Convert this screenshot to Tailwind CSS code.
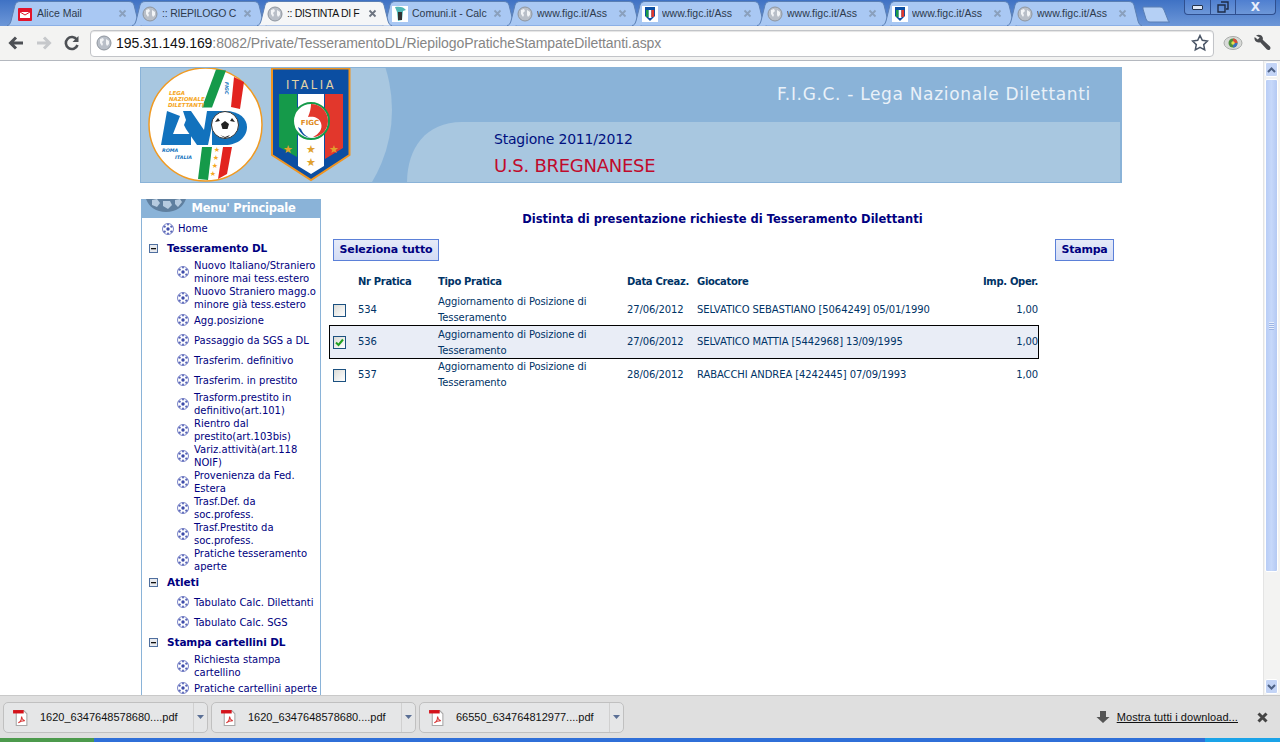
<!DOCTYPE html>
<html lang="it"><head><meta charset="utf-8">
<script src="https://cdn.jsdelivr.net/npm/@tailwindcss/browser@4"></script>
<title>Distinta</title></head>
<body class="m-0 bg-white">
<svg width="0" height="0" class="absolute">
  <defs>
    <symbol id="globe" viewBox="0 0 16 16"><circle cx="8" cy="8" r="7" fill="#b9bfc8" stroke="#8e959e"/><path d="M4 4l3-1 1 2-2 2 1 2-1 2-2-3zM10 4l3 2 0 3-2 2-1-2z" fill="#f2f4f6"/></symbol>
    <symbol id="figc" viewBox="0 0 16 16"><rect width="16" height="16" fill="#fff"/><path d="M3 1h10v9l-5 5-5-5z" fill="#0b4ea2"/><rect x="4" y="4" width="2.7" height="7" fill="#1c9a47"/><rect x="6.7" y="4" width="2.7" height="8" fill="#fff"/><rect x="9.4" y="4" width="2.7" height="7" fill="#e03a2c"/></symbol>
    <symbol id="ball" viewBox="0 0 12 12"><circle cx="6" cy="6" r="5.500" fill="#fff" stroke="#7a84c8"/><circle cx="6" cy="6" r="1.700" fill="#3c4aa8"/><circle cx="2.600" cy="3.600" r="1.200" fill="#5a67b8"/><circle cx="9.400" cy="3.600" r="1.200" fill="#5a67b8"/><circle cx="2.600" cy="8.600" r="1.200" fill="#5a67b8"/><circle cx="9.400" cy="8.600" r="1.200" fill="#5a67b8"/><circle cx="6" cy="10.600" r="1" fill="#5a67b8"/><circle cx="6" cy="1.400" r="1" fill="#5a67b8"/></symbol>
    <symbol id="minus" viewBox="0 0 9 9"><rect x=".5" y=".5" width="8" height="8" fill="#e8eaee" stroke="#4f6f9f"/><rect x="2" y="4" width="5" height="1.300" fill="#111"/></symbol>
    <symbol id="pdf" viewBox="0 0 16 16"><path d="M4 1.500h7l3 3v11H4z" fill="#fff" stroke="#a8a8a8"/><path d="M1 1h10v3.200H1z" fill="#d4121a"/><path d="M6 13c2-1 3-4 3-6 0 2 1 3 3 4-2 0-4 0-6 2z" fill="none" stroke="#d83a3a"/></symbol>
    <symbol id="tabshape" viewBox="0 0 135 26" preserveAspectRatio="none"><path d="M0 25.500C2 25.500 3 24 4 21L8 5C9 3 10 1.500 13 1.500H122C125 1.500 126 3 127 5L131 21C132 24 133 25.500 135 25.500" fill="currentColor" stroke="#5a7fb4"/></symbol>
    <symbol id="tabx" viewBox="0 0 9 9"><path d="M1.500 1.500l6 6M7.500 1.500l-6 6" fill="none" stroke="currentColor" stroke-width="1.800"/></symbol>
  </defs>
</svg>

<div class="relative flex h-[742px] w-[1280px] flex-col overflow-hidden font-['DejaVu_Sans',sans-serif] text-[11px]">

  <!-- tab strip -->
  <div class="relative h-[26px] shrink-0 bg-gradient-to-b from-[#3f72c4] to-[#6d97d8]">
    <div class="flex h-[26px] pl-[7px] font-['Liberation_Sans',sans-serif] text-[10.500px] text-[#2d3a4d]">
      <div class="relative -mr-[10px] h-[26px] w-[135px] shrink-0 text-[#a9c8f3]"><svg class="absolute inset-0 h-full w-full"><use href="#tabshape"/></svg>
        <div class="relative flex h-[26px] items-center pl-[10px] pr-[15px] pt-[1px]"><svg width="16" height="16" viewBox="0 0 16 16" class="shrink-0"><rect x="1" y="2" width="14" height="13" rx="1" fill="#e2132b"/><path d="M3 6h10v6H3z" fill="#fff"/><path d="M3 6l5 3 5-3" fill="none" stroke="#e2132b"/></svg><span class="ml-[4px] w-[76px] overflow-hidden whitespace-nowrap text-[#2d3a4d]">Alice Mail</span><svg width="9" height="9" class="ml-auto text-[#8aa0bd]"><use href="#tabx"/></svg></div></div>
      <div class="relative -mr-[10px] h-[26px] w-[135px] shrink-0 text-[#a9c8f3]"><svg class="absolute inset-0 h-full w-full"><use href="#tabshape"/></svg>
        <div class="relative flex h-[26px] items-center pl-[10px] pr-[15px] pt-[1px]"><svg width="16" height="16" class="shrink-0"><use href="#globe"/></svg><span class="ml-[4px] w-[76px] overflow-hidden whitespace-nowrap tracking-[-.2px] text-[#2d3a4d]">:: RIEPILOGO C</span><svg width="9" height="9" class="ml-auto text-[#8aa0bd]"><use href="#tabx"/></svg></div></div>
      <div class="relative z-10 -mr-[10px] h-[26px] w-[135px] shrink-0 text-[#f5f6f7]"><svg class="absolute inset-0 h-full w-full"><use href="#tabshape"/></svg>
        <div class="relative flex h-[26px] items-center pl-[10px] pr-[15px] pt-[1px]"><svg width="16" height="16" class="shrink-0"><use href="#globe"/></svg><span class="ml-[4px] w-[78px] whitespace-nowrap tracking-[-.35px] text-[#111]">:: DISTINTA DI F</span><svg width="9" height="9" class="ml-auto text-[#6d7480]"><use href="#tabx"/></svg></div></div>
      <div class="relative -mr-[10px] h-[26px] w-[135px] shrink-0 text-[#a9c8f3]"><svg class="absolute inset-0 h-full w-full"><use href="#tabshape"/></svg>
        <div class="relative flex h-[26px] items-center pl-[10px] pr-[15px] pt-[1px]"><svg width="16" height="16" viewBox="0 0 16 16" class="shrink-0"><rect width="16" height="16" fill="#fff"/><path d="M3 1c5-1 9 0 11 3l-3 1-1 9-4 1-1-9z" fill="#4fb7b5"/><path d="M6 6h4v8H6z" fill="#333"/></svg><span class="ml-[4px] w-[76px] overflow-hidden whitespace-nowrap text-[#2d3a4d]">Comuni.it - Calc</span><svg width="9" height="9" class="ml-auto text-[#8aa0bd]"><use href="#tabx"/></svg></div></div>
      <div class="relative -mr-[10px] h-[26px] w-[135px] shrink-0 text-[#a9c8f3]"><svg class="absolute inset-0 h-full w-full"><use href="#tabshape"/></svg>
        <div class="relative flex h-[26px] items-center pl-[10px] pr-[15px] pt-[1px]"><svg width="16" height="16" class="shrink-0"><use href="#globe"/></svg><span class="ml-[4px] w-[76px] overflow-hidden whitespace-nowrap text-[#2d3a4d]">www.figc.it/Ass</span><svg width="9" height="9" class="ml-auto text-[#8aa0bd]"><use href="#tabx"/></svg></div></div>
      <div class="relative -mr-[10px] h-[26px] w-[135px] shrink-0 text-[#a9c8f3]"><svg class="absolute inset-0 h-full w-full"><use href="#tabshape"/></svg>
        <div class="relative flex h-[26px] items-center pl-[10px] pr-[15px] pt-[1px]"><svg width="16" height="16" class="shrink-0"><use href="#figc"/></svg><span class="ml-[4px] w-[76px] overflow-hidden whitespace-nowrap text-[#2d3a4d]">www.figc.it/Ass</span><svg width="9" height="9" class="ml-auto text-[#8aa0bd]"><use href="#tabx"/></svg></div></div>
      <div class="relative -mr-[10px] h-[26px] w-[135px] shrink-0 text-[#a9c8f3]"><svg class="absolute inset-0 h-full w-full"><use href="#tabshape"/></svg>
        <div class="relative flex h-[26px] items-center pl-[10px] pr-[15px] pt-[1px]"><svg width="16" height="16" class="shrink-0"><use href="#globe"/></svg><span class="ml-[4px] w-[76px] overflow-hidden whitespace-nowrap text-[#2d3a4d]">www.figc.it/Ass</span><svg width="9" height="9" class="ml-auto text-[#8aa0bd]"><use href="#tabx"/></svg></div></div>
      <div class="relative -mr-[10px] h-[26px] w-[135px] shrink-0 text-[#a9c8f3]"><svg class="absolute inset-0 h-full w-full"><use href="#tabshape"/></svg>
        <div class="relative flex h-[26px] items-center pl-[10px] pr-[15px] pt-[1px]"><svg width="16" height="16" class="shrink-0"><use href="#figc"/></svg><span class="ml-[4px] w-[76px] overflow-hidden whitespace-nowrap text-[#2d3a4d]">www.figc.it/Ass</span><svg width="9" height="9" class="ml-auto text-[#8aa0bd]"><use href="#tabx"/></svg></div></div>
      <div class="relative -mr-[10px] h-[26px] w-[135px] shrink-0 text-[#a9c8f3]"><svg class="absolute inset-0 h-full w-full"><use href="#tabshape"/></svg>
        <div class="relative flex h-[26px] items-center pl-[10px] pr-[15px] pt-[1px]"><svg width="16" height="16" class="shrink-0"><use href="#globe"/></svg><span class="ml-[4px] w-[76px] overflow-hidden whitespace-nowrap text-[#2d3a4d]">www.figc.it/Ass</span><svg width="9" height="9" class="ml-auto text-[#8aa0bd]"><use href="#tabx"/></svg></div></div>
      <svg width="28" height="17" viewBox="0 0 28 17" class="relative ml-[10px] mt-[6px] shrink-0"><path d="M1 1h17c2 0 3 1 4 3l4 10c.3 1 .8 2 1.500 2H8c-2 0-3-1-4-3L1 3z" fill="#b5d0f5" stroke="#5a7fb4"/></svg>
    </div>
    <!-- window buttons -->
    <div class="absolute right-[4px] top-0 flex h-[15px] w-[92px] overflow-hidden rounded-b-[4px] border border-t-0 border-[#2f4f8f] bg-gradient-to-b from-[#4f7fd0] to-[#6d97d8]">
      <div class="flex w-[26px] items-center justify-center border-r border-[#2f4f8f]"><div class="h-[5px] w-[11px] rounded-[1px] border border-[#24344f] bg-[#dfe8f7]"></div></div>
      <div class="flex w-[25px] items-center justify-center border-r border-[#2f4f8f]"><svg width="12" height="12" viewBox="0 0 12 12"><path d="M4 1h7v7H9M1 4h7v7H1z" fill="none" stroke="#1e2c48" stroke-width="1.400"/></svg></div>
      <div class="flex flex-1 items-center justify-center text-[12px] font-bold leading-none text-[#e8eefb]">X</div>
    </div>
  </div>

  <!-- toolbar -->
  <div class="flex h-[35px] shrink-0 items-center border-b border-[#b4b8bf] bg-[#f3f3f2] pl-[6px] pr-[7px]">
    <svg width="20" height="20" viewBox="0 0 20 20" class="shrink-0"><path d="M17 10H6M10 4.500L4.500 10l5.500 5.500" fill="none" stroke="#4d5055" stroke-width="3"/></svg>
    <svg width="20" height="20" viewBox="0 0 20 20" class="ml-[8px] shrink-0"><path d="M3 10h11M10 4.500l5.500 5.500-5.500 5.500" fill="none" stroke="#c6c8cb" stroke-width="3"/></svg>
    <svg width="20" height="20" viewBox="0 0 20 20" class="ml-[8px] shrink-0"><path d="M15.500 12a6 6 0 1 1-.6-5.200" fill="none" stroke="#4d5055" stroke-width="2.600"/><path d="M16.500 3v6h-6z" fill="#4d5055"/></svg>
    <div class="ml-[8px] flex h-[27px] flex-1 items-center rounded-[4px] border border-[#c2c4c8] bg-white pl-[5px] pr-[2px] shadow-[inset_0_1px_1px_#e4e4e4]">
      <svg width="16" height="16" class="shrink-0"><use href="#globe"/></svg>
      <div class="ml-[4px] flex-1 whitespace-nowrap font-['Liberation_Sans',sans-serif] text-[14px] tracking-[-.07px] text-[#111]">195.31.149.169<span class="text-[#858585]">:8082/Private/TesseramentoDL/RiepilogoPraticheStampateDilettanti.aspx</span></div>
      <svg width="18" height="18" viewBox="0 0 18 18" class="mr-[2px] shrink-0"><path d="M9 1.500l2.300 4.800 5.200.7-3.800 3.600 1 5.200L9 13.300l-4.700 2.500 1-5.200L1.500 7l5.200-.7z" fill="#fff" stroke="#4a5566" stroke-width="1.500"/></svg>
    </div>
    <svg width="20" height="16" viewBox="0 0 20 16" class="ml-[9px] shrink-0"><ellipse cx="10" cy="8" rx="9" ry="6.500" fill="#d8dad8" stroke="#a9acaa"/><circle cx="10" cy="8" r="4.500" fill="#4f8f3c"/><path d="M10 3.500a4.500 4.500 0 0 1 4.500 4.500H10z" fill="#d84b3a"/><path d="M10 8h4.500a4.500 4.500 0 0 1-4.500 4.500z" fill="#3c6fc0"/><circle cx="10" cy="8" r="1.700" fill="#eadf4a"/></svg>
    <svg width="20" height="20" viewBox="0 0 20 20" class="ml-[10px] shrink-0"><path d="M3 2.500c2.500-1.500 5.500-.8 6.500 1.500.5 1 .5 2 .2 2.800l7 6.500c1 1 1 2.300.2 3.200-.9.800-2.200.800-3.200-.2l-6.500-7c-2.200.6-4.700-.3-5.500-2.500-.4-1-.4-2 0-2.800l3 2.500 2-2z" fill="#4a4c50"/></svg>
  </div>

  <!-- viewport -->
  <div class="flex min-h-0 flex-1">
    <div class="relative min-w-0 flex-1 overflow-hidden bg-white pl-[140px] pt-[6px]">
      <div class="w-[982px]">
        <!-- banner -->
        <div class="relative h-[116px] overflow-hidden border border-[#8ab3d8] bg-[#8ab3d8]">
          <svg class="absolute left-[-1px] top-[-1px]" width="982" height="116" viewBox="0 0 982 116">
            <rect width="982" height="116" fill="#8ab3d8"/>
            <circle cx="112" cy="43" r="140" fill="#a8c7e0"/>
            <path d="M267 116C267 82 285 55 322 55H980V116z" fill="#a8c7e0"/>
            <!-- LND logo -->
            <circle cx="65.500" cy="57.500" r="56.500" fill="#fff" stroke="#f09a22" stroke-width="1.500"/>
            <path d="M76 2.500l10 1-14 37-10 0z" fill="#159a4a"/>
            <path d="M94 10l10 5-4 27-9-2z" fill="#e2231f"/>
            <path d="M62 80h10l-4 33-10-1z" fill="#159a4a"/>
            <path d="M83 80h9l-5 27-9 5z" fill="#e2231f"/>
            <path d="M27 44l13 5-7 18h18v11H21z" fill="#1272bd"/>
            <path d="M43 44h8l13 19 3-19h8l-7 34H57L46 62l-2-4 2-5z" fill="#1272bd"/>
            <path d="M72 44H85C100 44 107 52 107 60C107 70 98 78 85 78H72z" fill="#1272bd"/>
            <circle cx="85" cy="58" r="13.500" fill="#fff" stroke="#333"/>
            <path d="M85 54l4 3-1.500 5h-5l-1.500-5zM75 55l3-4 2 3zM95 55l-3-4-2 3zM80 68l5 2 5-2-2 2-3 1z" fill="#222"/>
            <g fill="#f5a623" font-family="DejaVu Sans" font-size="5.500" font-weight="700" font-style="italic"><text x="29" y="28">LEGA</text><text x="29" y="34">NAZIONALE</text><text x="28" y="40">DILETTANTI</text></g>
            <g fill="#1272bd" font-family="DejaVu Sans" font-size="4.800" font-weight="700" font-style="italic"><text x="22" y="85">ROMA</text><text x="35" y="92">ITALIA</text><text transform="translate(85,15) rotate(90)">FIGC</text></g>
            <g fill="#f5a623" font-size="7" text-anchor="middle"><text x="77" y="85">★</text><text x="76" y="93">★</text><text x="75" y="101">★</text><text x="73" y="109">★</text></g>
            <!-- FIGC shield -->
            <path d="M132 1.500H209.500V88L171 113 132 88z" fill="#0b4ea2" stroke="#f0941f" stroke-width="2"/>
            <text x="171" y="22" text-anchor="middle" font-family="DejaVu Sans" font-size="11.500" letter-spacing="2.500" fill="#e3d4a6">ITALIA</text>
            <path d="M139 27h18v63l-18-10z" fill="#159a4a"/>
            <path d="M158 27h26v72l-13 8-13-8z" fill="#fff"/>
            <path d="M185 27h18v54l-18 11z" fill="#e2372c"/>
            <circle cx="171" cy="54" r="18" fill="#fff" stroke="#159a4a" stroke-width="2"/>
            <path d="M171 37a17 17 0 0 1 17 17c0 9-7 16-15 16 6-3 10-8 8-14-2-6-8-7-13-6 2-5 3-9 3-13z" fill="#e2372c"/>
            <path d="M158 60c2 7 8 11 14 11-3 0-9-3-11-9z" fill="#0b4ea2"/>
            <text x="170" y="58" text-anchor="middle" font-family="DejaVu Sans" font-size="7" font-weight="700" fill="#e08a20">FIGC</text>
            <g fill="#e0a12e" font-size="11" text-anchor="middle"><text x="148" y="86">★</text><text x="171" y="86">★</text><text x="194" y="86">★</text><text x="171" y="99">★</text></g>
          </svg>
          <div class="relative h-full">
            <div class="absolute right-[30px] top-[16px] whitespace-nowrap text-[17px] leading-[20px] tracking-[.67px] text-[#e9f1f8]">F.I.G.C. - Lega Nazionale Dilettanti</div>
            <div class="absolute left-[353px] top-[63px] whitespace-nowrap text-[14px] leading-[17px] tracking-[-.2px] text-[#00107f]">Stagione 2011/2012</div>
            <div class="absolute left-[353px] top-[87px] whitespace-nowrap text-[18px] leading-[22px] tracking-[-.27px] text-[#c00a2c]">U.S. BREGNANESE</div>
          </div>
        </div>

        <div class="mt-[16px] flex items-start">
          <!-- sidebar -->
          <div class="ml-[1px] w-[180px] shrink-0 border-x border-[#8ab3d8] text-[10px] leading-[13px] text-[#000080]">
            <div class="relative -mx-[1px] flex h-[19px] items-center justify-center overflow-hidden bg-[#8ab3d8] pl-[25px] text-[11.500px] font-bold tracking-[-.25px] text-white">
              <svg class="absolute left-[5px] top-0" width="40" height="13" viewBox="0 0 40 13"><path d="M0 0h40c-3 8-10 13-20 13S3 8 0 0z" fill="#5f7f9f"/><path d="M6 1l5-1 3 4-3 4-5-2zM17 2h7l2 4-4 4-5-3zM29 1l5-1 2 3-4 5-3-3z" fill="#b6cbe0"/></svg>
              Menu' Principale
            </div>
            <div class="flex h-[19px] items-center pl-[20px] pt-[2px]"><svg width="12" height="12" class="shrink-0"><use href="#ball"/></svg><span class="ml-[4px]">Home</span></div>
            <div class="mt-[1px] flex h-[20px] items-center pl-[7px] text-[10.500px] font-bold tracking-[-.1px]"><svg width="9" height="9" class="shrink-0"><use href="#minus"/></svg><span class="ml-[9px]">Tesseramento DL</span></div>
            <div class="mt-[1px] flex h-[26px] items-center pl-[35px]"><svg width="12" height="12" class="shrink-0"><use href="#ball"/></svg><span class="ml-[5px]">Nuovo Italiano/Straniero<br>minore mai tess.estero</span></div>
            <div class="flex h-[26px] items-center pl-[35px]"><svg width="12" height="12" class="shrink-0"><use href="#ball"/></svg><span class="ml-[5px]">Nuovo Straniero magg.o<br>minore già tess.estero</span></div>
            <div class="-mt-[1px] flex h-[20px] items-center pl-[35px]"><svg width="12" height="12" class="shrink-0"><use href="#ball"/></svg><span class="ml-[5px]">Agg.posizione</span></div>
            <div class="flex h-[20px] items-center pl-[35px]"><svg width="12" height="12" class="shrink-0"><use href="#ball"/></svg><span class="ml-[5px]">Passaggio da SGS a DL</span></div>
            <div class="flex h-[20px] items-center pl-[35px]"><svg width="12" height="12" class="shrink-0"><use href="#ball"/></svg><span class="ml-[5px]">Trasferim. definitivo</span></div>
            <div class="flex h-[20px] items-center pl-[35px]"><svg width="12" height="12" class="shrink-0"><use href="#ball"/></svg><span class="ml-[5px]">Trasferim. in prestito</span></div>
            <div class="mt-[1px] flex h-[26px] items-center pl-[35px]"><svg width="12" height="12" class="shrink-0"><use href="#ball"/></svg><span class="ml-[5px]">Trasform.prestito in<br>definitivo(art.101)</span></div>
            <div class="flex h-[26px] items-center pl-[35px]"><svg width="12" height="12" class="shrink-0"><use href="#ball"/></svg><span class="ml-[5px]">Rientro dal<br>prestito(art.103bis)</span></div>
            <div class="flex h-[26px] items-center pl-[35px]"><svg width="12" height="12" class="shrink-0"><use href="#ball"/></svg><span class="ml-[5px]">Variz.attività(art.118<br>NOIF)</span></div>
            <div class="flex h-[26px] items-center pl-[35px]"><svg width="12" height="12" class="shrink-0"><use href="#ball"/></svg><span class="ml-[5px]">Provenienza da Fed.<br>Estera</span></div>
            <div class="flex h-[26px] items-center pl-[35px]"><svg width="12" height="12" class="shrink-0"><use href="#ball"/></svg><span class="ml-[5px]">Trasf.Def. da<br>soc.profess.</span></div>
            <div class="flex h-[26px] items-center pl-[35px]"><svg width="12" height="12" class="shrink-0"><use href="#ball"/></svg><span class="ml-[5px]">Trasf.Prestito da<br>soc.profess.</span></div>
            <div class="flex h-[26px] items-center pl-[35px]"><svg width="12" height="12" class="shrink-0"><use href="#ball"/></svg><span class="ml-[5px]">Pratiche tesseramento<br>aperte</span></div>
            <div class="-mt-[1px] flex h-[20px] items-center pl-[7px] text-[10.500px] font-bold tracking-[-.1px]"><svg width="9" height="9" class="shrink-0"><use href="#minus"/></svg><span class="ml-[9px]">Atleti</span></div>
            <div class="flex h-[20px] items-center pl-[35px]"><svg width="12" height="12" class="shrink-0"><use href="#ball"/></svg><span class="ml-[5px]">Tabulato Calc. Dilettanti</span></div>
            <div class="flex h-[20px] items-center pl-[35px]"><svg width="12" height="12" class="shrink-0"><use href="#ball"/></svg><span class="ml-[5px]">Tabulato Calc. SGS</span></div>
            <div class="flex h-[20px] items-center pl-[7px] text-[10.500px] font-bold tracking-[-.1px]"><svg width="9" height="9" class="shrink-0"><use href="#minus"/></svg><span class="ml-[9px]">Stampa cartellini DL</span></div>
            <div class="mt-[1px] flex h-[26px] items-center pl-[35px]"><svg width="12" height="12" class="shrink-0"><use href="#ball"/></svg><span class="ml-[5px]">Richiesta stampa<br>cartellino</span></div>
            <div class="-mt-[1px] flex h-[20px] items-center pl-[35px]"><svg width="12" height="12" class="shrink-0"><use href="#ball"/></svg><span class="ml-[5px]">Pratiche cartellini aperte</span></div>
          </div>

          <!-- main -->
          <div class="ml-[12px] w-[781px] text-[10px] tracking-[-.1px] text-[#003366]">
            <div class="mt-[12px] pr-[2px] text-center text-[11.500px] font-bold leading-[16px] tracking-normal text-[#000080]">Distinta di presentazione richieste di Tesseramento Dilettanti</div>
            <div class="mt-[12px] flex justify-between">
              <button class="h-[22px] w-[106px] border border-[#5b80d8] bg-gradient-to-b from-[#e6ebf8] to-[#d3dcf5] font-['DejaVu_Sans',sans-serif] text-[11px] font-bold text-[#000080]">Seleziona tutto</button>
              <button class="h-[22px] w-[59px] border border-[#5b80d8] bg-gradient-to-b from-[#e6ebf8] to-[#d3dcf5] font-['DejaVu_Sans',sans-serif] text-[11px] font-bold tracking-[-.2px] text-[#000080]">Stampa</button>
            </div>
            <div class="mt-[11px] w-[705px]">
              <div class="flex h-[19px] items-center font-bold tracking-[-.33px]">
                <div class="w-[25px]"></div><div class="w-[80px]">Nr Pratica</div><div class="w-[189px]">Tipo Pratica</div><div class="w-[70px]">Data Creaz.</div><div class="w-[270px]">Giocatore</div><div class="flex-1 text-right">Imp. Oper.</div>
              </div>
              <div class="mt-[3px] flex h-[32px] items-center leading-[16px]">
                <div class="w-[25px]"><div class="h-[13px] w-[13px] border border-[#1c5180] bg-gradient-to-br from-[#dcdcd7] to-white"></div></div><div class="w-[80px]">534</div><div class="w-[189px]">Aggiornamento di Posizione di<br>Tesseramento</div><div class="w-[70px]">27/06/2012</div><div class="w-[270px]">SELVATICO SEBASTIANO [5064249] 05/01/1990</div><div class="flex-1 text-right">1,00</div>
              </div>
              <div class="-mx-[1px] -ml-[4px] -mt-[1px] flex h-[34px] items-center border border-black bg-[#e9edf6] pl-[3px] leading-[16px]">
                <div class="w-[25px]"><div class="flex h-[13px] w-[13px] items-center justify-center border border-[#1c5180] bg-gradient-to-br from-[#dcdcd7] to-white"><svg width="9" height="9" viewBox="0 0 9 9"><path d="M1 4.500l2.500 2.500L8 1.500" fill="none" stroke="#21a121" stroke-width="2"/></svg></div></div><div class="w-[80px]">536</div><div class="w-[189px] pt-[2px]">Aggiornamento di Posizione di<br>Tesseramento</div><div class="w-[70px]">27/06/2012</div><div class="w-[270px]">SELVATICO MATTIA [5442968] 13/09/1995</div><div class="flex-1 text-right">1,00</div>
              </div>
              <div class="flex h-[32px] items-center leading-[16px]">
                <div class="w-[25px]"><div class="h-[13px] w-[13px] border border-[#1c5180] bg-gradient-to-br from-[#dcdcd7] to-white"></div></div><div class="w-[80px]">537</div><div class="w-[189px]">Aggiornamento di Posizione di<br>Tesseramento</div><div class="w-[70px]">28/06/2012</div><div class="w-[270px]">RABACCHI ANDREA [4242445] 07/09/1993</div><div class="flex-1 text-right">1,00</div>
              </div>
            </div>
          </div>
        </div>
      </div>
    </div>

    <!-- scrollbar -->
    <div class="flex w-[17px] shrink-0 flex-col border-l border-[#e4e4e4] bg-[#f3f3f2] pb-[1px] pl-[1px] pr-[2px] pt-[1px]">
      <div class="flex h-[15px] items-center justify-center rounded-[2px] border border-white bg-[#c3d4f6]"><svg width="9" height="6" viewBox="0 0 9 6"><path d="M1 5l3.500-3.500L8 5" fill="none" stroke="#4d6185" stroke-width="2"/></svg></div>
      <div class="relative mt-[2px] h-[493px] rounded-[2px] border border-white bg-gradient-to-r from-[#b9cdf6] via-[#c6d8fa] to-[#b4c9f3]"><div class="absolute left-[3px] right-[3px] top-[242px] h-[8px] bg-[repeating-linear-gradient(#e6eefc_0_1px,#9db5e4_1px_2px)]"></div></div>
      <div class="mt-auto flex h-[15px] items-center justify-center rounded-[2px] border border-white bg-[#c3d4f6]"><svg width="9" height="6" viewBox="0 0 9 6"><path d="M1 1l3.500 3.500L8 1" fill="none" stroke="#4d6185" stroke-width="2"/></svg></div>
    </div>
  </div>

  <!-- download bar -->
  <div class="flex h-[43px] shrink-0 items-center border-t border-[#c9c9c9] bg-[#dfdfdf] pl-[3px] pr-[12px] font-['Liberation_Sans',sans-serif] text-[11px] text-[#111]">
    <div class="flex h-[31px] w-[205px] items-center rounded-[5px] border border-[#c0c0c0] bg-[#e5e6e7]"><svg width="17" height="17" class="ml-[8px] shrink-0"><use href="#pdf"/></svg><span class="ml-[11px] flex-1 whitespace-nowrap">1620_6347648578680....pdf</span><div class="flex h-[29px] w-[14px] items-center justify-center border-l border-[#d0d0d0]"><svg width="7" height="4"><path d="M0 0h7L3.500 4z" fill="#5a6f95"/></svg></div></div>
    <div class="ml-[3px] flex h-[31px] w-[205px] items-center rounded-[5px] border border-[#c0c0c0] bg-[#e5e6e7]"><svg width="17" height="17" class="ml-[8px] shrink-0"><use href="#pdf"/></svg><span class="ml-[11px] flex-1 whitespace-nowrap">1620_6347648578680....pdf</span><div class="flex h-[29px] w-[14px] items-center justify-center border-l border-[#d0d0d0]"><svg width="7" height="4"><path d="M0 0h7L3.500 4z" fill="#5a6f95"/></svg></div></div>
    <div class="ml-[3px] flex h-[31px] w-[205px] items-center rounded-[5px] border border-[#c0c0c0] bg-[#e5e6e7]"><svg width="17" height="17" class="ml-[8px] shrink-0"><use href="#pdf"/></svg><span class="ml-[11px] flex-1 whitespace-nowrap">66550_634764812977....pdf</span><div class="flex h-[29px] w-[14px] items-center justify-center border-l border-[#d0d0d0]"><svg width="7" height="4"><path d="M0 0h7L3.500 4z" fill="#5a6f95"/></svg></div></div>
    <svg width="14" height="14" viewBox="0 0 14 14" class="ml-auto shrink-0"><path d="M4 1h6v6h3.500L7 13 .5 7H4z" fill="#555"/></svg>
    <span class="ml-[7px] whitespace-nowrap tracking-[.08px] underline">Mostra tutti i download...</span>
    <svg width="11" height="11" viewBox="0 0 11 11" class="ml-[19px] shrink-0"><path d="M1.500 1.500l8 8M9.500 1.500l-8 8" stroke="#444" stroke-width="3"/></svg>
  </div>
  <!-- taskbar sliver -->
  <div class="flex h-[4px] shrink-0 bg-[#2f6fd8]"><div class="w-[94px] bg-[#4c9a4c]"></div><div class="ml-auto w-[75px] bg-[#1aa3e8]"></div></div>
</div>
</body></html>
